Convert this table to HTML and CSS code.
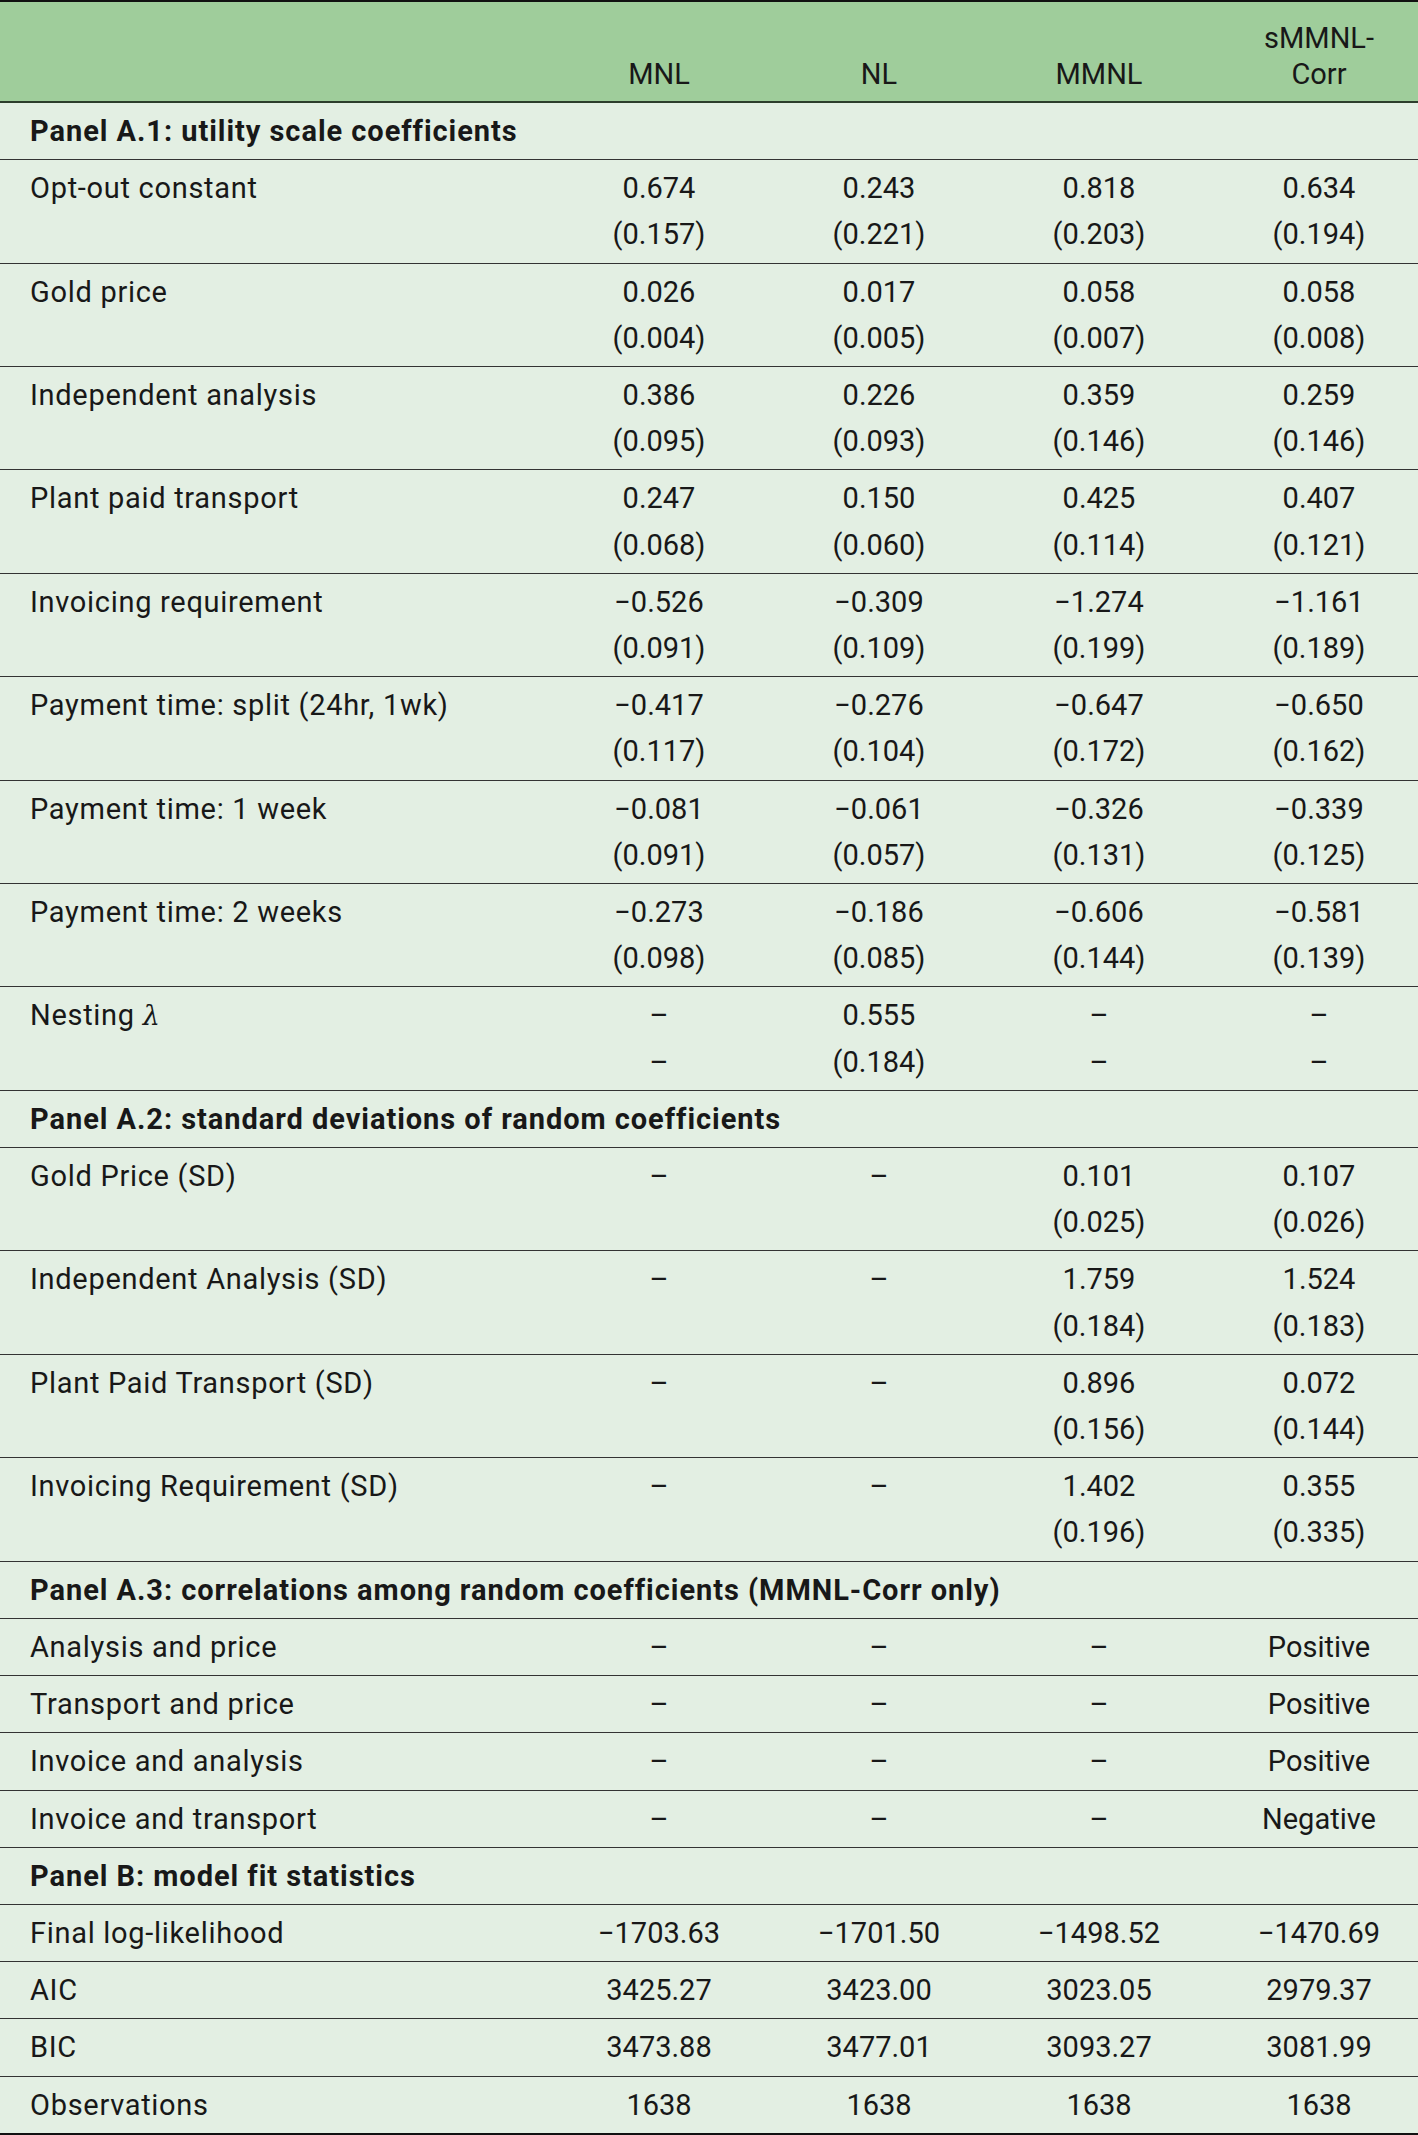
FILE: index.html
```html
<!DOCTYPE html>
<html lang="en">
<head>
    <meta charset="UTF-8">
    <meta name="viewport" content="width=device-width, initial-scale=1.0">
    <title>Model estimates</title>
    <link rel="stylesheet" href="styles.css">
</head>
<body>
    <table class="results">
        <colgroup>
            <col class="col-label">
            <col class="col-model">
            <col class="col-model">
            <col class="col-model">
            <col class="col-model">
        </colgroup>
        <thead>
            <tr>
                <th></th>
                <th>MNL</th>
                <th>NL</th>
                <th>MMNL</th>
                <th>sMMNL-<br>Corr</th>
            </tr>
        </thead>
        <tbody>
            <tr class="panel"><td colspan="5">Panel A.1: utility scale coefficients</td></tr>
            <tr>
                <td>Opt-out constant</td>
                <td>0.674<br>(0.157)</td>
                <td>0.243<br>(0.221)</td>
                <td>0.818<br>(0.203)</td>
                <td>0.634<br>(0.194)</td>
            </tr>
            <tr>
                <td>Gold price</td>
                <td>0.026<br>(0.004)</td>
                <td>0.017<br>(0.005)</td>
                <td>0.058<br>(0.007)</td>
                <td>0.058<br>(0.008)</td>
            </tr>
            <tr>
                <td>Independent analysis</td>
                <td>0.386<br>(0.095)</td>
                <td>0.226<br>(0.093)</td>
                <td>0.359<br>(0.146)</td>
                <td>0.259<br>(0.146)</td>
            </tr>
            <tr>
                <td>Plant paid transport</td>
                <td>0.247<br>(0.068)</td>
                <td>0.150<br>(0.060)</td>
                <td>0.425<br>(0.114)</td>
                <td>0.407<br>(0.121)</td>
            </tr>
            <tr>
                <td>Invoicing requirement</td>
                <td>&minus;0.526<br>(0.091)</td>
                <td>&minus;0.309<br>(0.109)</td>
                <td>&minus;1.274<br>(0.199)</td>
                <td>&minus;1.161<br>(0.189)</td>
            </tr>
            <tr>
                <td>Payment time: split (24hr, 1wk)</td>
                <td>&minus;0.417<br>(0.117)</td>
                <td>&minus;0.276<br>(0.104)</td>
                <td>&minus;0.647<br>(0.172)</td>
                <td>&minus;0.650<br>(0.162)</td>
            </tr>
            <tr>
                <td>Payment time: 1 week</td>
                <td>&minus;0.081<br>(0.091)</td>
                <td>&minus;0.061<br>(0.057)</td>
                <td>&minus;0.326<br>(0.131)</td>
                <td>&minus;0.339<br>(0.125)</td>
            </tr>
            <tr>
                <td>Payment time: 2 weeks</td>
                <td>&minus;0.273<br>(0.098)</td>
                <td>&minus;0.186<br>(0.085)</td>
                <td>&minus;0.606<br>(0.144)</td>
                <td>&minus;0.581<br>(0.139)</td>
            </tr>
            <tr>
                <td>Nesting <i class="math">&lambda;</i></td>
                <td>&ndash;<br>&ndash;</td>
                <td>0.555<br>(0.184)</td>
                <td>&ndash;<br>&ndash;</td>
                <td>&ndash;<br>&ndash;</td>
            </tr>

            <tr class="panel"><td colspan="5">Panel A.2: standard deviations of random coefficients</td></tr>
            <tr>
                <td>Gold Price (SD)</td>
                <td>&ndash;<br>&nbsp;</td>
                <td>&ndash;</td>
                <td>0.101<br>(0.025)</td>
                <td>0.107<br>(0.026)</td>
            </tr>
            <tr>
                <td>Independent Analysis (SD)</td>
                <td>&ndash;<br>&nbsp;</td>
                <td>&ndash;</td>
                <td>1.759<br>(0.184)</td>
                <td>1.524<br>(0.183)</td>
            </tr>
            <tr>
                <td>Plant Paid Transport (SD)</td>
                <td>&ndash;<br>&nbsp;</td>
                <td>&ndash;</td>
                <td>0.896<br>(0.156)</td>
                <td>0.072<br>(0.144)</td>
            </tr>
            <tr>
                <td>Invoicing Requirement (SD)</td>
                <td>&ndash;<br>&nbsp;</td>
                <td>&ndash;</td>
                <td>1.402<br>(0.196)</td>
                <td>0.355<br>(0.335)</td>
            </tr>

            <tr class="panel"><td colspan="5">Panel A.3: correlations among random coefficients (MMNL-Corr only)</td></tr>
            <tr>
                <td>Analysis and price</td>
                <td>&ndash;</td><td>&ndash;</td><td>&ndash;</td><td>Positive</td>
            </tr>
            <tr>
                <td>Transport and price</td>
                <td>&ndash;</td><td>&ndash;</td><td>&ndash;</td><td>Positive</td>
            </tr>
            <tr>
                <td>Invoice and analysis</td>
                <td>&ndash;</td><td>&ndash;</td><td>&ndash;</td><td>Positive</td>
            </tr>
            <tr>
                <td>Invoice and transport</td>
                <td>&ndash;</td><td>&ndash;</td><td>&ndash;</td><td>Negative</td>
            </tr>

            <tr class="panel"><td colspan="5">Panel B: model fit statistics</td></tr>
            <tr>
                <td>Final log-likelihood</td>
                <td>&minus;1703.63</td><td>&minus;1701.50</td><td>&minus;1498.52</td><td>&minus;1470.69</td>
            </tr>
            <tr>
                <td>AIC</td>
                <td>3425.27</td><td>3423.00</td><td>3023.05</td><td>2979.37</td>
            </tr>
            <tr>
                <td>BIC</td>
                <td>3473.88</td><td>3477.01</td><td>3093.27</td><td>3081.99</td>
            </tr>
            <tr>
                <td>Observations</td>
                <td>1638</td><td>1638</td><td>1638</td><td>1638</td>
            </tr>
        </tbody>
    </table>
</body>
</html>
```

FILE: styles.css
```css
body {
    margin: 0;
    background-color: #e3efe3;
    font-family: Roboto, "Noto Sans", sans-serif;
    font-size: 29px;
    color: #181818;
}
.results {
    width: 1418px;
    border-collapse: collapse;
    table-layout: fixed;
    border-top: 2px solid #111;
    border-bottom: 3px solid #111;
}
.col-label {
    width: 538px;
}
.col-model {
    width: 220px;
}
.results th {
    background-color: #9fcd9b;
    font-weight: normal;
    line-height: 36px;
    height: 101px;
    box-sizing: border-box;
    padding: 0 0 9px 22px;
    vertical-align: bottom;
    text-align: center;
    border-bottom: 2px solid #2c3e2c;
}
.results td {
    line-height: 46.2px;
    padding: 5px 0 5px 22px;
    vertical-align: top;
    text-align: center;
    border-bottom: 1px solid #333;
}
.results td:first-child {
    padding-left: 30px;
    text-align: left;
    letter-spacing: 0.7px;
}
.results tbody tr:last-child td {
    border-bottom: none;
}
.results .panel td {
    font-weight: bold;
    letter-spacing: 0.95px;
}
.math {
    font-family: "DejaVu Serif", serif;
    font-size: 27px;
}
```
